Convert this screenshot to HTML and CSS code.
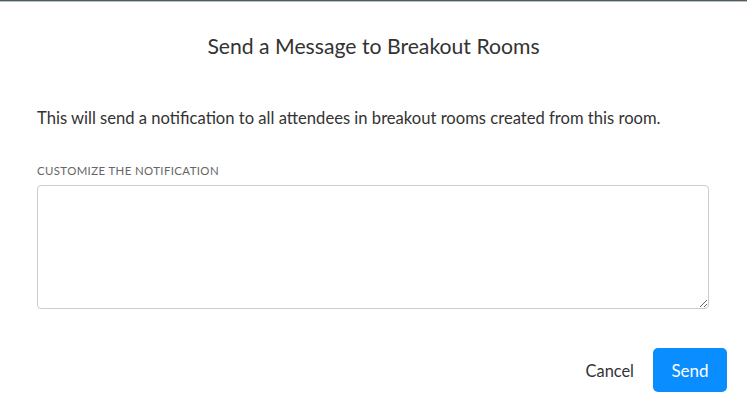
FILE: index.html
```html
<!DOCTYPE html>
<html lang="en">
<head>
<meta charset="UTF-8" />
<title>Send a Message to Breakout Rooms</title>
<link rel="stylesheet" href="styles.css">
</head>
<body>
  <!-- bande du haut (fond derrière la modale) -->
  <div class="backdrop-strip"></div>

  <div class="modal">
    <h2 class="modal-title">Send a Message to Breakout Rooms</h2>

    <p class="modal-text">This will send a notification to all attendees in breakout rooms created from this room.</p>

    <label class="field-label" for="notif">Customize the notification</label>
    <textarea id="notif" class="field-input"></textarea>

    <div class="modal-actions">
      <button class="btn-cancel">Cancel</button>
      <button class="btn-send">Send</button>
    </div>
  </div>
</body>
</html>
```

FILE: styles.css
```css
/* ========== Global ========== */
html, body {
  margin: 0;
  height: 100%;
  overflow: hidden;
  font-family: Lato, "Open Sans", sans-serif;
  background: #fff;
}
.backdrop-strip {
  height: 1px;
  background: #4d5d63;
  border-bottom: 1px solid #b9bfc1;
}
/* Modale */
.modal {
  padding: 0 20px 0 37px;
  display: flex;
  flex-direction: column;
}
.modal-title {
  margin: 31px 0 0 -17px;
  font-size: 21.2px;
  font-weight: 400;
  color: #333;
  text-align: center;
  line-height: 26px;
}
.modal-text {
  margin: 48px 0 0;
  font-size: 16.6px;
  color: #333;
  line-height: 22px;
}
.field-label {
  margin-top: 35px;
  font-size: 11.4px;
  letter-spacing: 0.4px;
  text-transform: uppercase;
  color: #666;
  line-height: 14px;
}
.field-input {
  margin: 7px 18px 0 0;
  height: 124px;
  border: 1px solid #ccc;
  border-radius: 4px;
  resize: vertical;
  font-family: inherit;
  font-size: 14px;
  padding: 6px;
  box-sizing: border-box;
}
/* Boutons */
.modal-actions {
  margin-top: 39px;
  display: flex;
  justify-content: flex-end;
  align-items: center;
  gap: 19px;
}
.btn-cancel {
  background: none;
  border: none;
  font-family: inherit;
  font-size: 16.4px;
  color: #333;
  padding: 0;
  cursor: pointer;
}
.btn-send {
  width: 74px;
  height: 44px;
  background: #0a8dff;
  border: none;
  border-radius: 5px;
  color: #fff;
  font-family: inherit;
  font-size: 17px;
  cursor: pointer;
}
```
